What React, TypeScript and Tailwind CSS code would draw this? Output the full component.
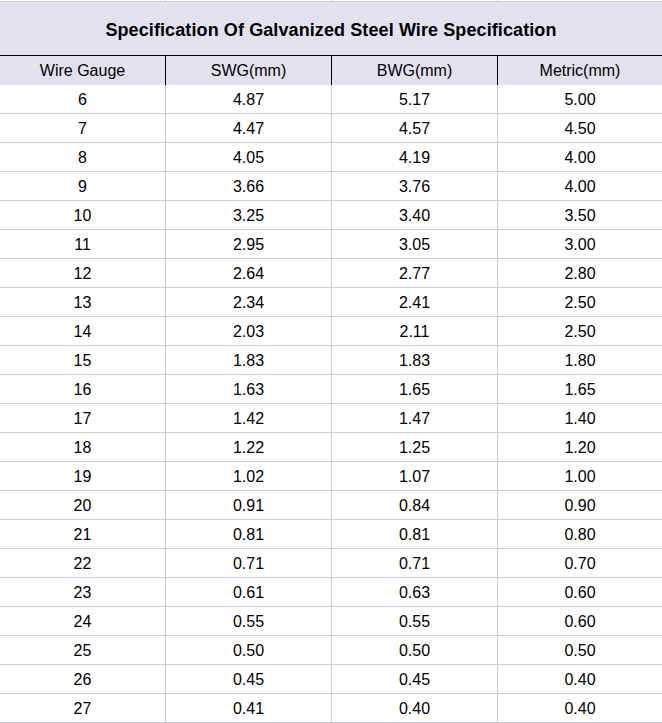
import React from 'react';

// --- DATA ---
const rows: [string, string, string, string][] = [
  ['6', '4.87', '5.17', '5.00'],
  ['7', '4.47', '4.57', '4.50'],
  ['8', '4.05', '4.19', '4.00'],
  ['9', '3.66', '3.76', '4.00'],
  ['10', '3.25', '3.40', '3.50'],
  ['11', '2.95', '3.05', '3.00'],
  ['12', '2.64', '2.77', '2.80'],
  ['13', '2.34', '2.41', '2.50'],
  ['14', '2.03', '2.11', '2.50'],
  ['15', '1.83', '1.83', '1.80'],
  ['16', '1.63', '1.65', '1.65'],
  ['17', '1.42', '1.47', '1.40'],
  ['18', '1.22', '1.25', '1.20'],
  ['19', '1.02', '1.07', '1.00'],
  ['20', '0.91', '0.84', '0.90'],
  ['21', '0.81', '0.81', '0.80'],
  ['22', '0.71', '0.71', '0.70'],
  ['23', '0.61', '0.63', '0.60'],
  ['24', '0.55', '0.55', '0.60'],
  ['25', '0.50', '0.50', '0.50'],
  ['26', '0.45', '0.45', '0.40'],
  ['27', '0.41', '0.40', '0.40'],
];

const headers = ['Wire Gauge', 'SWG(mm)', 'BWG(mm)', 'Metric(mm)'];

const cols = 'grid grid-cols-[166px_166px_166px_164px]';

export default function App() {
  return (
    <div className="w-[662px] h-[723px] overflow-hidden bg-white text-black font-['Liberation_Sans',Arial,sans-serif]">
      {/* tail of previous row */}
      <div className={`${cols} h-px`}>
        <div className="border-r border-[#c9cdd9]" />
        <div className="border-r border-[#c9cdd9]" />
        <div className="border-r border-[#c9cdd9]" />
        <div />
      </div>

      {/* title */}
      <div className="h-[55px] border-t border-[#c9cdd9] border-b border-b-black bg-[#e4e1ee] flex items-center justify-center">
        <h1 className="text-[18px] font-bold leading-none pt-[2px] tracking-[0.1px]">
          Specification Of Galvanized Steel Wire Specification
        </h1>
      </div>

      {/* header */}
      <div className={`${cols} h-[29px] bg-[#e4e1ee]`}>
        {headers.map((h, i) => (
          <div
            key={h}
            className={`flex items-center justify-center text-[16px] ${i < 3 ? 'border-r border-black' : ''}`}
          >
            {h}
          </div>
        ))}
      </div>

      {/* data */}
      {rows.map((r) => (
        <div key={r[0]} className={`${cols} h-[29px] border-b border-[#c9cdd9]`}>
          {r.map((v, i) => (
            <div
              key={i}
              className={`flex items-center justify-center text-[16px] pt-[2px] ${i < 3 ? 'border-r border-[#c9cdd9]' : ''}`}
            >
              {v}
            </div>
          ))}
        </div>
      ))}
    </div>
  );
}
